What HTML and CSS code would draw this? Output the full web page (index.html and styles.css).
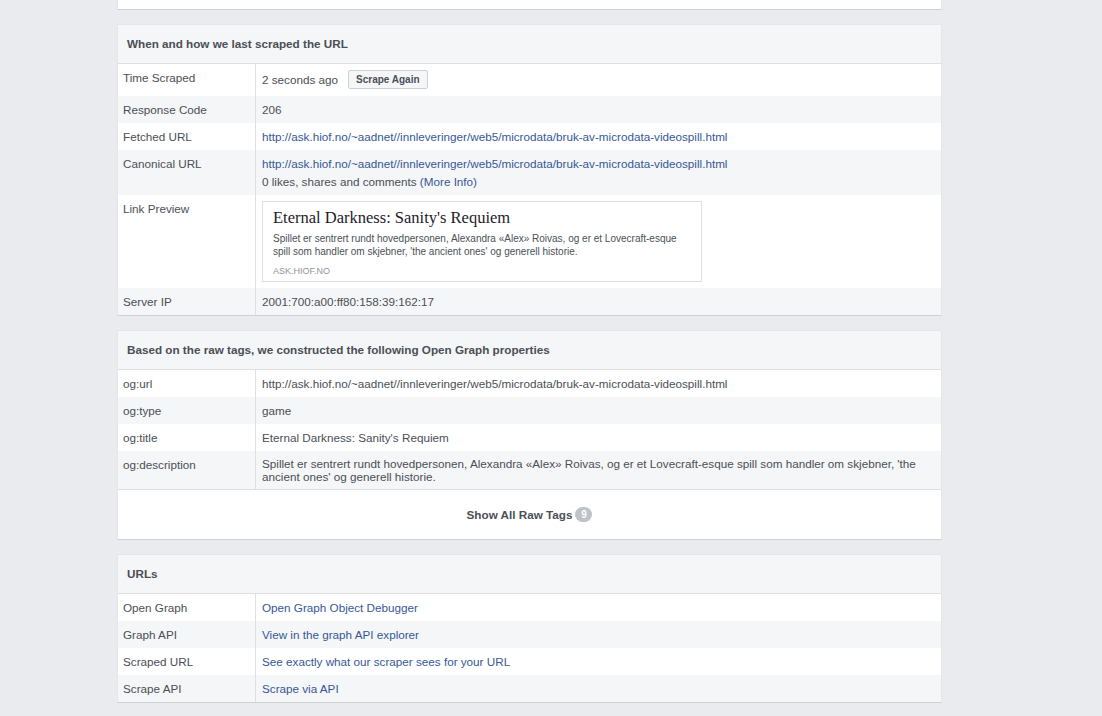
FILE: index.html
```html
<!DOCTYPE html>
<html>
<head>
<meta charset="utf-8">
<link rel="stylesheet" href="styles.css">
</head>
<body>
<div class="page">
  <div class="card card-top"></div>

  <div class="card">
    <div class="card-head">When and how we last scraped the URL</div>
    <div class="rows">
      <div class="row"><div class="label">Time Scraped</div><div class="value value-flex"><span>2 seconds ago</span><button class="btn">Scrape Again</button></div></div>
      <div class="row alt"><div class="label">Response Code</div><div class="value">206</div></div>
      <div class="row"><div class="label">Fetched URL</div><div class="value"><a class="link">http://ask.hiof.no/~aadnet//innleveringer/web5/microdata/bruk-av-microdata-videospill.html</a></div></div>
      <div class="row alt"><div class="label">Canonical URL</div><div class="value"><a class="link">http://ask.hiof.no/~aadnet//innleveringer/web5/microdata/bruk-av-microdata-videospill.html</a><div class="likes">0 likes, shares and comments <a class="link">(More Info)</a></div></div></div>
      <div class="row"><div class="label">Link Preview</div><div class="value value-preview">
        <div class="preview">
          <div class="pv-title">Eternal Darkness: Sanity's Requiem</div>
          <div class="pv-desc">Spillet er sentrert rundt hovedpersonen, Alexandra «Alex» Roivas, og er et Lovecraft-esque spill som handler om skjebner, 'the ancient ones' og generell historie.</div>
          <div class="pv-domain">ASK.HIOF.NO</div>
        </div>
      </div></div>
      <div class="row alt"><div class="label">Server IP</div><div class="value">2001:700:a00:ff80:158:39:162:17</div></div>
    </div>
  </div>

  <div class="card">
    <div class="card-head">Based on the raw tags, we constructed the following Open Graph properties</div>
    <div class="rows">
      <div class="row"><div class="label">og:url</div><div class="value">http://ask.hiof.no/~aadnet//innleveringer/web5/microdata/bruk-av-microdata-videospill.html</div></div>
      <div class="row alt"><div class="label">og:type</div><div class="value">game</div></div>
      <div class="row"><div class="label">og:title</div><div class="value">Eternal Darkness: Sanity's Requiem</div></div>
      <div class="row alt"><div class="label">og:description</div><div class="value value-tight">Spillet er sentrert rundt hovedpersonen, Alexandra «Alex» Roivas, og er et Lovecraft-esque spill som handler om skjebner, 'the ancient ones' og generell historie.</div></div>
    </div>
    <div class="card-foot"><span class="foot-text">Show All Raw Tags</span><span class="badge">9</span></div>
  </div>

  <div class="card">
    <div class="card-head">URLs</div>
    <div class="rows">
      <div class="row"><div class="label">Open Graph</div><div class="value"><a class="link">Open Graph Object Debugger</a></div></div>
      <div class="row alt"><div class="label">Graph API</div><div class="value"><a class="link">View in the graph API explorer</a></div></div>
      <div class="row"><div class="label">Scraped URL</div><div class="value"><a class="link">See exactly what our scraper sees for your URL</a></div></div>
      <div class="row alt"><div class="label">Scrape API</div><div class="value"><a class="link">Scrape via API</a></div></div>
    </div>
  </div>
</div>
</body>
</html>
```
FILE: styles.css
```css
html, body {
  margin: 0;
  padding: 0;
  background: #e9ebee;
  font-family: "Liberation Sans", Arial, Helvetica, sans-serif;
  font-size: 11.7px;
  color: #4b4f56;
}
.page {
  width: 825px;
  margin-left: 117px;
  display: flex;
  flex-direction: column;
  gap: 14px;
}
.card {
  background: #fff;
  border: 1px solid #e5e6e9;
  border-bottom-color: #d0d1d5;
  box-sizing: border-box;
}
.card-top {
  height: 10px;
  border-top: none;
}
.card-head {
  background: #f5f6f7;
  border-bottom: 1px solid #dddfe2;
  height: 39px;
  box-sizing: border-box;
  padding: 0 9px 1px 9px;
  display: flex;
  align-items: center;
  font-weight: bold;
  color: #4b4f56;
}
.rows {
  display: flex;
  flex-direction: column;
}
.row {
  display: flex;
  background: #fff;
}
.row.alt {
  background: #f5f6f7;
}
.label {
  width: 138px;
  flex: none;
  box-sizing: border-box;
  padding: 6px 6px 5px 5px;
  line-height: 16px;
  color: #4b4f56;
  border-right: 1px solid #dddfe2;
}
.value {
  flex: 1;
  padding: 6px 6px 5px 6px;
  line-height: 16px;
  color: #4b4f56;
}
.value-flex {
  display: flex;
  align-items: center;
  gap: 10px;
  padding-bottom: 7px;
  padding-top: 6px;
}
.value-tight {
  line-height: 13px;
  padding-top: 6px;
  padding-bottom: 6px;
}
.value-preview {
  padding-bottom: 6px;
}
.btn {
  font-family: "Liberation Sans", Arial, Helvetica, sans-serif;
  font-size: 10px;
  font-weight: bold;
  color: #4b4f56;
  background: #f5f6f7;
  border: 1px solid #ced0d4;
  border-radius: 2px;
  height: 19px;
  padding: 0 7px;
  line-height: 17px;
  margin: 0;
}
.link {
  color: #365899;
  text-decoration: none;
}
.likes {
  margin-top: 2px;
}
.preview {
  width: 440px;
  height: 81px;
  box-sizing: border-box;
  border: 1px solid #dddfe2;
  background: #fff;
  padding: 6px 10px 5px 10px;
}
.pv-title {
  font-family: "Liberation Serif", Georgia, serif;
  font-size: 16.5px;
  line-height: 20px;
  color: #1d2129;
}
.pv-desc {
  font-size: 10px;
  line-height: 13px;
  color: #4b4f56;
  margin-top: 4px;
}
.pv-domain {
  font-size: 9px;
  line-height: 12px;
  color: #90949c;
  margin-top: 7px;
}
.card-foot {
  border-top: 1px solid #dddfe2;
  height: 49px;
  display: flex;
  align-items: center;
  justify-content: center;
  gap: 3px;
}
.foot-text {
  font-weight: bold;
  color: #4b4f56;
}
.badge {
  background: #bec2c9;
  color: #fff;
  font-weight: bold;
  font-size: 10px;
  border-radius: 8px;
  height: 15px;
  min-width: 17px;
  line-height: 15px;
  text-align: center;
  display: inline-block;
}
```
